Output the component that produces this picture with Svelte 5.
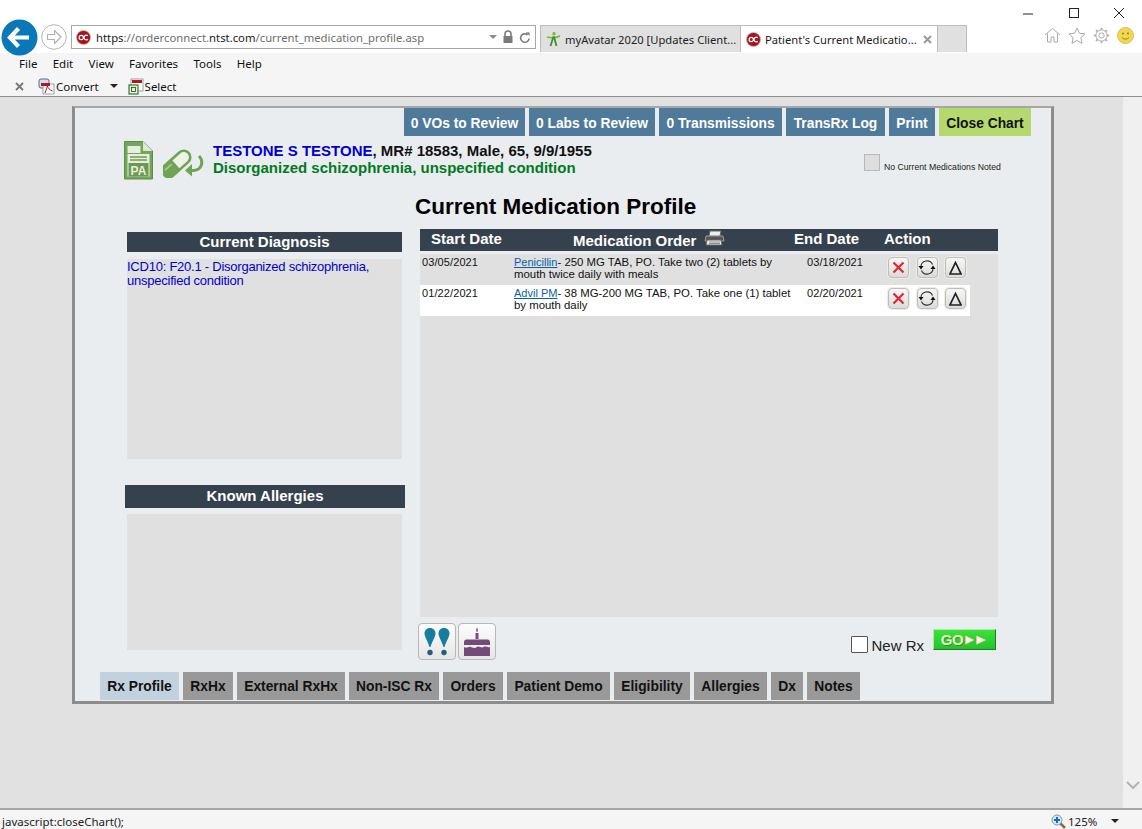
<script>
  const menu = ['File', 'Edit', 'View', 'Favorites', 'Tools', 'Help'];
  const actions = [
    { label: '0 VOs to Review', w: 121 },
    { label: '0 Labs to Review', w: 126 },
    { label: '0 Transmissions', w: 123 },
    { label: 'TransRx Log', w: 99 },
    { label: 'Print', w: 46 },
    { label: 'Close Chart', w: 92, close: true }
  ];
  const tabs = [
    { label: 'Rx Profile', w: 79, active: true },
    { label: 'RxHx', w: 50 },
    { label: 'External RxHx', w: 108 },
    { label: 'Non-ISC Rx', w: 90 },
    { label: 'Orders', w: 60 },
    { label: 'Patient Demo', w: 103 },
    { label: 'Eligibility', w: 76 },
    { label: 'Allergies', w: 73 },
    { label: 'Dx', w: 32 },
    { label: 'Notes', w: 53 }
  ];
  const meds = [
    { start: '03/05/2021', name: 'Penicillin', rest: '- 250 MG TAB, PO. Take two (2) tablets by mouth twice daily with meals', end: '03/18/2021' },
    { start: '01/22/2021', name: 'Advil PM', rest: '- 38 MG-200 MG TAB, PO. Take one (1) tablet by mouth daily', end: '02/20/2021', white: true }
  ];
</script>

{#snippet oc(size)}
  <svg class="oc" width={size} height={size} viewBox="0 0 16 16">
    <circle cx="8" cy="8" r="7.5" fill="#a3161c" />
    <circle cx="8" cy="8" r="7.5" fill="none" stroke="#d8b8b8" stroke-width="0.8" />
    <circle cx="5.6" cy="8" r="2.3" fill="none" stroke="#fff" stroke-width="1.3" />
    <path d="M12.6 6.2a2.4 2.4 0 1 0 0 3.6" fill="none" stroke="#fff" stroke-width="1.3" />
  </svg>
{/snippet}

<div class="app">
  <header class="chrome">
    <div class="winctl">
      <svg width="12" height="12" viewBox="0 0 12 12"><path d="M1 7h10" stroke="#222" stroke-width="1" /></svg>
      <svg width="12" height="12" viewBox="0 0 12 12"><rect x="1.5" y="1.5" width="9" height="9" fill="none" stroke="#222" /></svg>
      <svg width="12" height="12" viewBox="0 0 12 12"><path d="M1 1l10 10M11 1L1 11" stroke="#222" stroke-width="1" /></svg>
    </div>
    <div class="navrow">
      <div class="nav-btns">
        <svg class="back" width="37" height="37" viewBox="0 0 37 37">
          <circle cx="18.5" cy="18.5" r="18" fill="#0a78b8" />
          <path d="M9 18.5h19M17.5 9.5l-8.5 9 8.5 9" fill="none" stroke="#fff" stroke-width="4.2" stroke-linejoin="miter" />
        </svg>
        <svg class="fwd" width="26" height="26" viewBox="0 0 26 26">
          <circle cx="13" cy="13" r="12.3" fill="#fff" stroke="#b4b4b4" />
          <path d="M6.5 10.5h7V6.5l6.5 6.5-6.5 6.5v-4h-7z" fill="none" stroke="#b0b0b0" stroke-width="1.1" stroke-linejoin="round" />
        </svg>
      </div>
      <div class="address">
        {@render oc(15)}
        <span class="url"><b>https</b>://orderconnect.<b>ntst.com</b>/current_medication_profile.asp</span>
        <span class="caret gray"></span>
        <svg width="12" height="14" viewBox="0 0 12 14"><path d="M3 6V4a3 3 0 0 1 6 0v2" fill="none" stroke="#7a7a7a" stroke-width="1.6" /><rect x="1.5" y="6" width="9" height="7" fill="#7a7a7a" /></svg>
        <svg width="12" height="13" viewBox="0 0 12 13"><path d="M10 7.5a4.2 4.2 0 1 1-1.4-3.6" fill="none" stroke="#7a7a7a" stroke-width="1.6" /><path d="M6.8 1.2l3.8.2.2 3.6z" fill="#7a7a7a" /></svg>
      </div>
      <div class="tabstrip">
        <div class="tab first">
          <svg class="fav" width="15" height="16" viewBox="0 0 15 16"><circle cx="8" cy="2.8" r="1.7" fill="#7ab63f" /><path d="M1 6c3 1 9 1 13-1" fill="none" stroke="#7ab63f" stroke-width="1.6" /><path d="M7.5 5.5L4.500 15M8 5.500l2.500 9.500" fill="none" stroke="#3f8e3a" stroke-width="1.8" /></svg>
          <span>myAvatar 2020 [Updates Client...</span>
        </div>
        <div class="tab current">
          {@render oc(15)}
          <span>Patient's Current Medicatio...</span>
          <svg class="tabx" width="9" height="9" viewBox="0 0 9 9"><path d="M1 1l7 7M8 1L1 8" stroke="#9a9a9a" stroke-width="2" /></svg>
        </div>
        <div class="tab blank"></div>
      </div>
      <div class="tools">
        <svg width="17" height="16" viewBox="0 0 17 16"><path d="M1 8l7.5-6.5L16 8M3.5 6.5V15h3.5v-5h3v5h3.5V6.5" fill="none" stroke="#a9a9a9" /></svg>
        <svg width="18" height="17" viewBox="0 0 18 17"><path d="M9 1l2.400 5.200 5.600.7-4.100 3.800 1.100 5.600L9 13.500l-5 2.800 1.100-5.600L1 6.900l5.600-.7z" fill="none" stroke="#a9a9a9" /></svg>
        <svg width="17" height="17" viewBox="0 0 17 17"><circle cx="8.5" cy="8.5" r="2.6" fill="none" stroke="#a9a9a9" /><circle cx="8.5" cy="8.5" r="5.6" fill="none" stroke="#a9a9a9" /><path d="M8.5 .8v2.2M8.5 14v2.2M.8 8.500H3M14 8.500h2.200M3 3l1.600 1.600M12.400 12.400L14 14M14 3l-1.600 1.600M4.600 12.400L3 14" stroke="#a9a9a9" stroke-width="1.6" /></svg>
        <svg width="17" height="17" viewBox="0 0 17 17"><circle cx="8.5" cy="8.5" r="8" fill="#f2d64b" stroke="#d8bd6a" /><circle cx="6" cy="6.5" r="1" fill="#8a7a20" /><circle cx="11" cy="6.5" r="1" fill="#8a7a20" /><path d="M5 10.500c1.500 2 5.500 2 7 0" fill="none" stroke="#8a7a20" /></svg>
      </div>
    </div>
  </header>

  <div class="bars">
    <nav class="menubar">
      {#each menu as m}<span>{m}</span>{/each}
    </nav>
    <div class="toolbar">
      <svg class="xclose" width="9" height="9" viewBox="0 0 9 9"><path d="M1 1l7 7M8 1L1 8" stroke="#777" stroke-width="1.8" /></svg>
      <svg class="conv" width="17" height="17" viewBox="0 0 17 17"><rect x="1" y="1" width="10" height="9" rx="2" fill="#cfe0f0" stroke="#4a6d96" /><path d="M5 6h11v10H5z" fill="#fff" stroke="#8a8a8a" stroke-width=".8" /><path d="M3 5h9v3H3z" fill="#b3161c" /><path d="M7 15c1-3 2-5 2.500-7 .5 2 2 4 5 5" fill="none" stroke="#b3161c" /></svg>
      <span class="tbtext">Convert</span>
      <span class="caret dark"></span>
      <svg class="sel" width="16" height="17" viewBox="0 0 16 17"><rect x="3" y="1" width="12" height="12" fill="#fff" stroke="#8a8a8a" stroke-width=".8" /><rect x="4" y="2" width="10" height="3" fill="#b3161c" /><rect x="1" y="7" width="9" height="9" fill="#e8f0d8" stroke="#2e7d32" stroke-width="1.2" /><rect x="3.500" y="9.500" width="4" height="4" fill="none" stroke="#333" stroke-width=".8" /></svg>
      <span class="tbtext">Select</span>
    </div>
  </div>

  <div class="viewport">
    <main class="page">
      <section class="card">
        <div class="actions">
          {#each actions as a}
            <button class="action" class:close={a.close} style="width:{a.w}px">{a.label}</button>
          {/each}
        </div>

        <div class="patient">
          <svg class="pa" width="29" height="39" viewBox="0 0 29 39">
            <path d="M.5.5H19L28.500 10v28H.5z" fill="#74a55a" stroke="#5c8f45" />
            <path d="M19 .5V10h9.500z" fill="#dce8d2" />
            <rect x="3.500" y="5" width="13" height="7" fill="#e8eedf" />
            <rect x="3.500" y="13" width="22" height="22.500" fill="#e8eedf" />
            <path d="M6 16h17M6 19h17" stroke="#6c9a52" stroke-width="1.500" />
            <rect x="4.500" y="22" width="20" height="13.500" fill="#6c9a52" />
            <text x="14.500" y="34" text-anchor="middle" class="patext">PA</text>
          </svg>
          <svg class="pill" width="42" height="32" viewBox="0 0 42 32">
            <g transform="rotate(-42 14 18)">
              <rect x="-3" y="11" width="33" height="13" rx="6.500" fill="#eef3e8" stroke="#6fa454" stroke-width="2.600" />
              <path d="M13 11H3.500a6.500 6.500 0 0 0 0 13H13z" fill="#6fa454" />
              <path d="M1 14.500h9" stroke="#a9cc93" stroke-width="1.600" />
            </g>
            <path d="M36 10c5 5 3 14-5 14.500h-4" fill="none" stroke="#6fa454" stroke-width="3" />
            <path d="M29 18l-7 6.500 7 6z" fill="#6fa454" />
          </svg>
          <div class="who">
            <div class="line1"><span class="pname">TESTONE S TESTONE</span>, MR# 18583, Male, 65, 9/9/1955</div>
            <div class="line2">Disorganized schizophrenia, unspecified condition</div>
          </div>
          <label class="nomeds"><span class="nocheck"></span><span>No Current Medications Noted</span></label>
        </div>

        <h1>Current Medication Profile</h1>

        <div class="columns">
          <aside class="left">
            <div class="bar diag">Current Diagnosis</div>
            <div class="box diagbox">ICD10: F20.1 - Disorganized schizophrenia, unspecified condition</div>
            <div class="bar allergy">Known Allergies</div>
            <div class="box allergybox"></div>
          </aside>

          <div class="right">
            <div class="thead">
              <span class="h-start">Start Date</span>
              <span class="h-order">Medication Order
                <svg width="21" height="16" viewBox="0 0 21 16"><path d="M6 1h11l-1 5H5z" fill="#eee" stroke="#666" /><path d="M2 6h17l1 5H1z" fill="#555" stroke="#ccc" stroke-width=".6" /><path d="M3 10h14l1 5H2z" fill="#eee" stroke="#666" /><path d="M5 12h11M5 13.500h11" stroke="#666" stroke-width=".7" /></svg>
              </span>
              <span class="h-end">End Date</span>
              <span class="h-action">Action</span>
            </div>
            <div class="tbody">
              {#each meds as m}
                <div class="row" class:white={m.white}>
                  <div class="c-start">{m.start}</div>
                  <div class="c-order"><a href="#top">{m.name}</a><span class="rest">{m.rest}</span></div>
                  <div class="c-end">{m.end}</div>
                  <div class="c-act">
                    <span class="iconbtn"><svg width="13" height="13" viewBox="0 0 13 13"><path d="M1.500 1.500l10 10M11.500 1.500l-10 10" stroke="#e0262c" stroke-width="2.200" /></svg></span>
                    <span class="iconbtn"><svg width="18" height="15" viewBox="0 0 18 15"><path d="M3 7a6 6 0 0 1 11.500-2.500M15 8a6 6 0 0 1-11.500 2.500" fill="none" stroke="#333" stroke-width="1.100" /><path d="M.5 6h5L3 9.500zM12.500 9h5L15 5.500z" fill="#111" /></svg></span>
                    <span class="iconbtn"><svg width="13" height="14" viewBox="0 0 13 14"><path d="M6.500 1.500L12 13H1z" fill="none" stroke="#222" stroke-width="1.700" /></svg></span>
                  </div>
                </div>
              {/each}
            </div>
            <div class="under">
              <div class="bigbtns">
                <span class="bigbtn"><svg width="28" height="29" viewBox="0 0 28 29"><path d="M7 1c3.500 0 5.500 2.500 5.500 5.500S9 15 7.500 20h-1C5 15 1.500 9.500 1.500 6.500S3.500 1 7 1zM21 1c3.500 0 5.500 2.500 5.500 5.500S23 15 21.500 20h-1C19 15 15.500 9.500 15.500 6.500S17.500 1 21 1z" fill="#177d9e" /><circle cx="7" cy="25.500" r="2.700" fill="#1f5f7c" /><circle cx="21" cy="25.500" r="2.700" fill="#1f5f7c" /></svg></span>
                <span class="bigbtn"><svg width="30" height="32" viewBox="0 0 30 32"><path d="M15 1.500c1.500 2 1.500 3.500 0 5-1.500-1.500-1.500-3 0-5z" fill="#9a70a0" /><rect x="13.500" y="7" width="3" height="6" fill="#7a4f80" /><path d="M4 13.500h22a2.500 2.500 0 0 1 2 2V19H2v-3.500a2.500 2.500 0 0 1 2-2z" fill="#744a79" /><path d="M2 21c3 2 4.500-1 7 0s3.500 1.500 6 0 4 1.500 6.500 0 4 1 6.500 0V30H2z" fill="#744a79" /></svg></span>
              </div>
              <div class="newrx">
                <label class="nrlabel"><span class="rxcheck"></span><span>New Rx</span></label>
                <button class="go">GO<svg width="24" height="12" viewBox="0 0 24 12"><path d="M1 1l10 5-10 5zM12 1l11 5-11 5z" fill="#f2f7e0" stroke="#6aa636" stroke-width=".8" /></svg></button>
              </div>
            </div>
          </div>
        </div>

        <div class="tabs">
          {#each tabs as t}
            <button class="ptab" class:active={t.active} style="width:{t.w}px">{t.label}</button>
          {/each}
        </div>
      </section>
    </main>
    <div class="scroll">
      <svg width="14" height="9" viewBox="0 0 14 9"><path d="M1 1l6 6 6-6" fill="none" stroke="#b4b4b4" stroke-width="2" /></svg>
    </div>
  </div>

  <footer class="status">
    <span class="sttext">javascript:closeChart();</span>
    <span class="zoom">
      <svg width="15" height="15" viewBox="0 0 15 15"><path d="M9 9l5 5" stroke="#8a6a3a" stroke-width="2.500" /><circle cx="6" cy="6" r="5" fill="#d8e8f5" stroke="#7f9ab5" /><path d="M6 3v6M3 6h6" stroke="#1270c0" stroke-width="2" /></svg>
      <span>125%</span>
    </span>
    <span class="caret dark stcaret"></span>
  </footer>
</div>

<style>
  :global(body) { margin: 0; background: #e1e1e1; }
  .app {
    width: 1142px; height: 829px; overflow: hidden;
    display: flex; flex-direction: column;
    font-family: "Liberation Sans", Arial, sans-serif;
  }
  .chrome { height: 53px; background: #fff; flex: none; position: relative; z-index: 1; }
  .winctl { display: flex; height: 25px; padding-left: 1022px; gap: 33.500px; padding-top: 7px; box-sizing: border-box; }
  .navrow { display: flex; height: 28px; position: relative; }
  .nav-btns { display: flex; align-items: flex-start; width: 71px; flex: none; }
  .back { margin: -6px 0 0 1px; flex: none; }
  .fwd { margin: -1px 0 0 3px; flex: none; }
  .address {
    width: 465px; height: 24px; box-sizing: border-box; border: 1px solid #a8a8a8; background: #fff;
    display: flex; align-items: center; padding: 0 4px 0 4px; gap: 5px; flex: none;
    font: 11.300px "Noto Sans", sans-serif; color: #6e6e6e;
  }
  .oc, .fav { flex: none; }
  .url { flex: 1; white-space: nowrap; }
  .url b { font-weight: 400; color: #1a1a1a; }
  .caret { width: 0; height: 0; border-left: 4px solid transparent; border-right: 4px solid transparent; flex: none; }
  .caret.gray { border-top: 4px solid #8a8a8a; }
  .caret.dark { border-top: 4px solid #222; }
  .tabstrip { display: flex; margin-left: 4px; align-items: flex-end; height: 28px; flex: none; margin-top: -1px; }
  .tab {
    height: 27px; box-sizing: border-box; display: flex; align-items: center; gap: 5px;
    font: 11.200px "Noto Sans", sans-serif; color: #222; white-space: nowrap; overflow: hidden;
    border: 1px solid #bdbdbd; border-bottom: none;
  }
  .tab.first { width: 200px; background: #e0e0e0; padding-left: 5px; gap: 4px; border-right: none; }
  .tab.current { width: 198px; background: #fff; padding-left: 5px; gap: 4px; }
  .tabx { margin-left: 2px; flex: none; }
  .tab.blank { width: 29px; background: #e0e0e0; border-left: none; }
  .tools { display: flex; gap: 7px; margin-left: 77px; align-items: flex-start; margin-top: 2px; }

  .bars { height: 44px; background: #f5f5f5; flex: none; box-sizing: border-box; border-bottom: 1px solid #8e8e8e; font: 11.500px "Noto Sans", sans-serif; color: #111; }
  .menubar { height: 21px; display: flex; align-items: center; padding-left: 19px; gap: 15.300px; }
  .toolbar { height: 22px; display: flex; align-items: center; padding-left: 15px; padding-top: 2px; box-sizing: border-box; }
  .xclose { margin-right: 14px; flex: none; }
  .conv { margin-right: 1px; flex: none; }
  .toolbar .caret { margin: 0 10px 0 11px; }
  .sel { margin-right: 1px; flex: none; }

  .viewport { flex: 1; display: flex; min-height: 0; background: #e1e1e1; }
  .page { flex: 1; padding: 9px 0 0 72px; min-width: 0; }
  .scroll { width: 19px; background: #f0f0f0; flex: none; display: flex; flex-direction: column; justify-content: flex-end; align-items: center; padding-bottom: 18px; box-sizing: border-box; }
  .card {
    width: 982px; height: 598px; box-sizing: border-box; background: #e9edf0;
    border: 3px solid #8c8c8c; border-top: 2px solid #a6a6a6; display: flex; flex-direction: column;
  }
  .actions { display: flex; gap: 4px; justify-content: flex-end; padding-right: 20px; flex: none; }
  button { font-family: inherit; border: none; padding: 0; margin: 0; }
  .action {
    height: 28px; background: #4f7a9a; color: #fff; padding-top: 2px;
    font-size: 13.800px; font-weight: 700; white-space: nowrap;
  }
  .action.close { background: #b5d96f; color: #111; }

  .patient { display: flex; height: 40px; margin-top: 5px; flex: none; padding-left: 49px; }
  .pa { flex: none; }
  .patext { font: 700 12px "Liberation Sans", Arial, sans-serif; fill: #e8eedf; }
  .pill { margin: 5px 0 0 10px; flex: none; }
  .who { margin-left: 8px; margin-top: 1px; font-weight: 700; font-size: 15px; line-height: 17px; width: 651px; flex: none; color: #111; white-space: nowrap; }
  .pname { color: #0000cc; }
  .line2 { color: #007a1f; }
  .nomeds { display: flex; align-items: flex-end; gap: 4px; font-size: 8.700px; color: #222; margin-top: 13px; height: 18px; white-space: nowrap; }
  .nocheck { width: 16px; height: 17px; box-sizing: border-box; background: #dedede; border: 1px solid #b8b8b8; flex: none; margin-bottom: 1px; }
  .nomeds span:last-child { line-height: 10px; }

  h1 { margin: 12px 0 0 340px; font-size: 22.500px; line-height: 28px; font-weight: 700; color: #000; white-space: nowrap; flex: none; }

  .columns { display: flex; flex: none; height: 443px; margin-top: 8px; }
  .left { width: 280px; margin-left: 50px; flex: none; margin-top: 3px; }
  .bar { background: #35424d; color: #fff; font-weight: 700; font-size: 15px; text-align: center; }
  .diag { height: 20px; line-height: 19px; margin-left: 2px; width: 275px; }
  .allergy { height: 23px; line-height: 22px; width: 280px; margin-top: 26px; }
  .box { background: #e0e0e0; margin-left: 2px; }
  .diagbox { height: 200px; width: 275px; margin-top: 7px; color: #0000cc; font-size: 13px; line-height: 14px; padding-top: 1px; box-sizing: border-box; letter-spacing: -.24px; }
  .allergybox { height: 136px; width: 275px; margin-top: 6px; }

  .right { width: 578px; margin-left: 15px; flex: none; }
  .thead { height: 22px; background: #35424d; color: #fff; font-weight: 700; font-size: 15px; display: grid; grid-template-columns: 142px 221px 90px 1fr; line-height: 22px; white-space: nowrap; }
  .h-start { padding-left: 11px; margin-top: -1px; }
  .h-order { padding-left: 11px; margin-top: 1px; display: flex; align-items: flex-start; gap: 8px; }
  .h-order svg { flex: none; }
  .h-end { margin-top: -1px; padding-left: 11px; }
  .h-action { margin-top: -1px; padding-left: 11px; }

  .tbody { height: 363px; background: #e0e0e0; margin-top: 3px; box-sizing: border-box; }
  .row { width: 550px; height: 31px; display: grid; grid-template-columns: 94px 293px 81px 1fr; font-size: 11px; line-height: 12px; color: #111; }
  .row.white { background: #fff; }
  .c-start { padding: 2px 0 0 2px; letter-spacing: .1px; }
  .c-order { padding: 2px 8px 0 0; }
  .rest { font-size: 11.400px; }
  .c-order a { color: #0a5fa8; }
  .c-end { padding: 2px 0 0 0; letter-spacing: .1px; }
  .c-act { display: flex; gap: 7.500px; padding-top: 3px; }
  .iconbtn {
    width: 21px; height: 21px; box-sizing: border-box; border: 1px solid #bdbdbd; border-radius: 4px;
    background: linear-gradient(#f7f7f7, #dcdcdc); display: flex; align-items: center; justify-content: center;
    box-shadow: 0 0 0 1px #eeeedd;
  }

  .under { display: flex; justify-content: space-between; margin-top: 6px; }
  .bigbtns { display: flex; gap: 2px; margin-left: -2px; }
  .bigbtn {
    width: 38px; height: 37px; box-sizing: border-box; border: 1px solid #b8b8b8; border-radius: 4px;
    background: linear-gradient(#fcfcfc, #e6e6e6); display: flex; align-items: center; justify-content: center;
  }
  .newrx { display: flex; gap: 9px; padding-right: 2px; align-items: flex-start; padding-top: 7px; }
  .nrlabel { display: flex; gap: 3px; font-size: 15px; color: #222; margin-top: 6px; align-items: center; height: 17px; line-height: 17px; }
  .nrlabel span:last-child { margin-top: 2px; }
  .rxcheck { width: 17px; height: 17px; box-sizing: border-box; border: 1px solid #555; background: #fff; border-radius: 1px; }
  .go {
    width: 63px; height: 21px; box-sizing: border-box; display: flex; align-items: center; justify-content: center; gap: 1px;
    background: linear-gradient(#39e23a, #22c62a); border: 1px solid; border-color: #a7eda7 #217a28 #217a28 #a7eda7;
    color: #e8f6c8; font-weight: 700; font-size: 15px; text-shadow: 1px 1px 0 #3c8a2a; letter-spacing: -.3px; margin-top: -1px;
  }
  .tabs { display: flex; gap: 4px; padding-left: 25px; flex: none; }
  .ptab { height: 28px; background: #999; color: #111; font-size: 13.800px; font-weight: 700; white-space: nowrap; }
  .ptab.active { background: #c1d1dd; }

  .status {
    height: 21px; flex: none; box-sizing: border-box; background: #f5f5f5; border-top: 2px solid #a6a6a6;
    display: flex; align-items: center; font: 11.500px "Noto Sans", sans-serif; color: #222;
    padding: 3px 0 0 2px; position: relative;
  }
  .sttext { flex: 1; }
  .zoom { display: flex; align-items: center; gap: 2px; width: 60px; }
  .stcaret { margin-right: 23px; }
</style>
